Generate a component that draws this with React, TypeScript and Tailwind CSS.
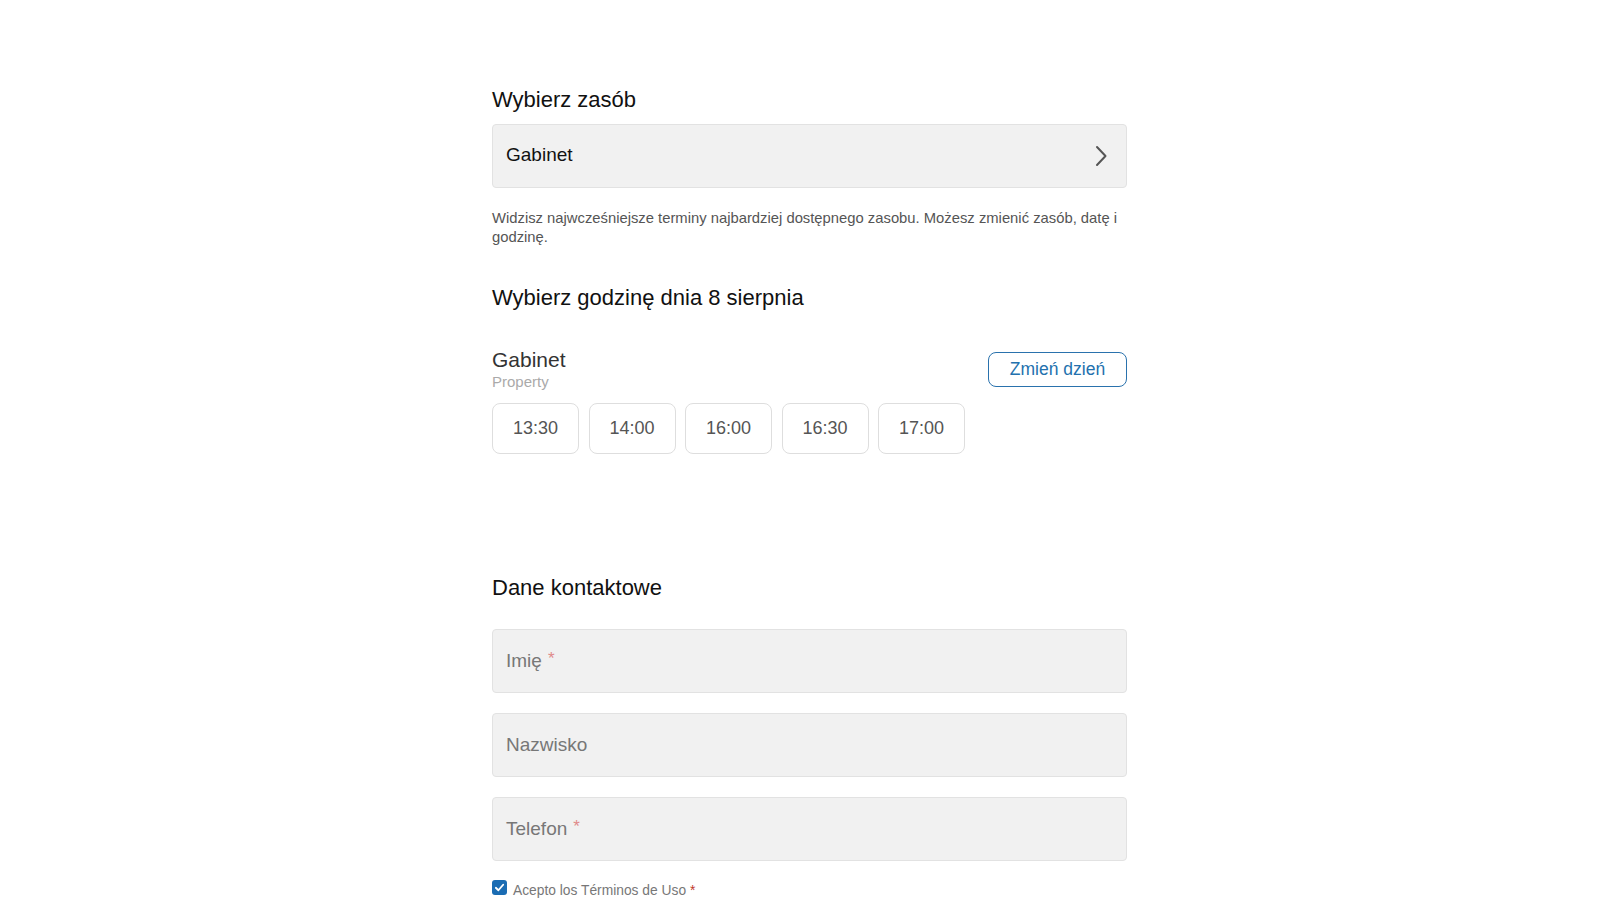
import React from "react";

export default function App() {
  const slots = ["13:30", "14:00", "16:00", "16:30", "17:00"];
  return (
    <div className="min-h-screen bg-white" style={{ fontFamily: '"Liberation Sans", Arial, sans-serif' }}>
      <div className="flex justify-center pl-[3px]">
        <div className="w-[635px] pt-[87px]">
          <h2 className="text-[22px] leading-[26px] text-[#111]">Wybierz zasób</h2>
          <div className="mt-[11px] h-[64px] rounded-[4px] border border-[#e2e2e2] bg-[#f1f1f1] flex items-center justify-between pl-[13px] pr-[18px]">
            <span className="text-[19px] text-[#111] -mt-[1px]">Gabinet</span>
            <svg width="14" height="22" viewBox="0 0 14 22" fill="none">
              <path d="M3 2 L11.5 11 L3 20" stroke="#555" strokeWidth="2" strokeLinecap="round" strokeLinejoin="round" />
            </svg>
          </div>
          <p className="mt-[21px] text-[14.8px] leading-[18.5px] text-[#555]">
            Widzisz najwcześniejsze terminy najbardziej dostępnego zasobu. Możesz zmienić zasób, datę i godzinę.
          </p>
          <h2 className="mt-[39px] text-[22px] leading-[26px] text-[#111]">Wybierz godzinę dnia 8 sierpnia</h2>
          <div className="mt-[37px] flex items-start justify-between">
            <div>
              <div className="text-[21px] leading-[24px] text-[#333]">Gabinet</div>
              <div className="mt-[1px] text-[15px] leading-[18px] text-[#aaa]">Property</div>
            </div>
            <button className="mt-[4px] h-[35px] w-[139px] rounded-[8px] border border-[#2a72ad] text-[17.5px] text-[#2371ae] bg-white">
              Zmień dzień
            </button>
          </div>
          <div className="mt-[12px] flex gap-[9.5px]">
            {slots.map((s) => (
              <div key={s} className="w-[87px] h-[51px] rounded-[8px] border border-[#dedede] flex items-center justify-center text-[18px] text-[#555] bg-white">
                {s}
              </div>
            ))}
          </div>
          <h2 className="mt-[121px] text-[22px] leading-[26px] text-[#111]">Dane kontaktowe</h2>
          <div className="mt-[28px] flex flex-col gap-[20px]">
            {[
              { l: "Imię", r: true },
              { l: "Nazwisko", r: false },
              { l: "Telefon", r: true },
            ].map((f) => (
              <div key={f.l} className="h-[64px] rounded-[4px] border border-[#e2e2e2] bg-[#f1f1f1] flex items-center pl-[13px]">
                <span className="text-[19px] text-[#777]">{f.l}</span>
                {f.r && <span className="ml-[6px] text-[17px] text-[#e08a8a] -mt-[5px]">*</span>}
              </div>
            ))}
          </div>
          <div className="mt-[18px] flex items-start gap-[6px]">
            <div className="mt-[1px] w-[15px] h-[15px] rounded-[3px] bg-[#1a6cb3] flex items-center justify-center">
              <svg width="11" height="11" viewBox="0 0 12 12" fill="none">
                <path d="M2 6.3 L4.8 9 L10 3" stroke="white" strokeWidth="2" strokeLinecap="round" strokeLinejoin="round" />
              </svg>
            </div>
            <span className="mt-[3px] text-[13.8px] leading-[18px] text-[#777]">
              Acepto los Términos de Uso <span className="text-[#c0392b]">*</span>
            </span>
          </div>
        </div>
      </div>
    </div>
  );
}
